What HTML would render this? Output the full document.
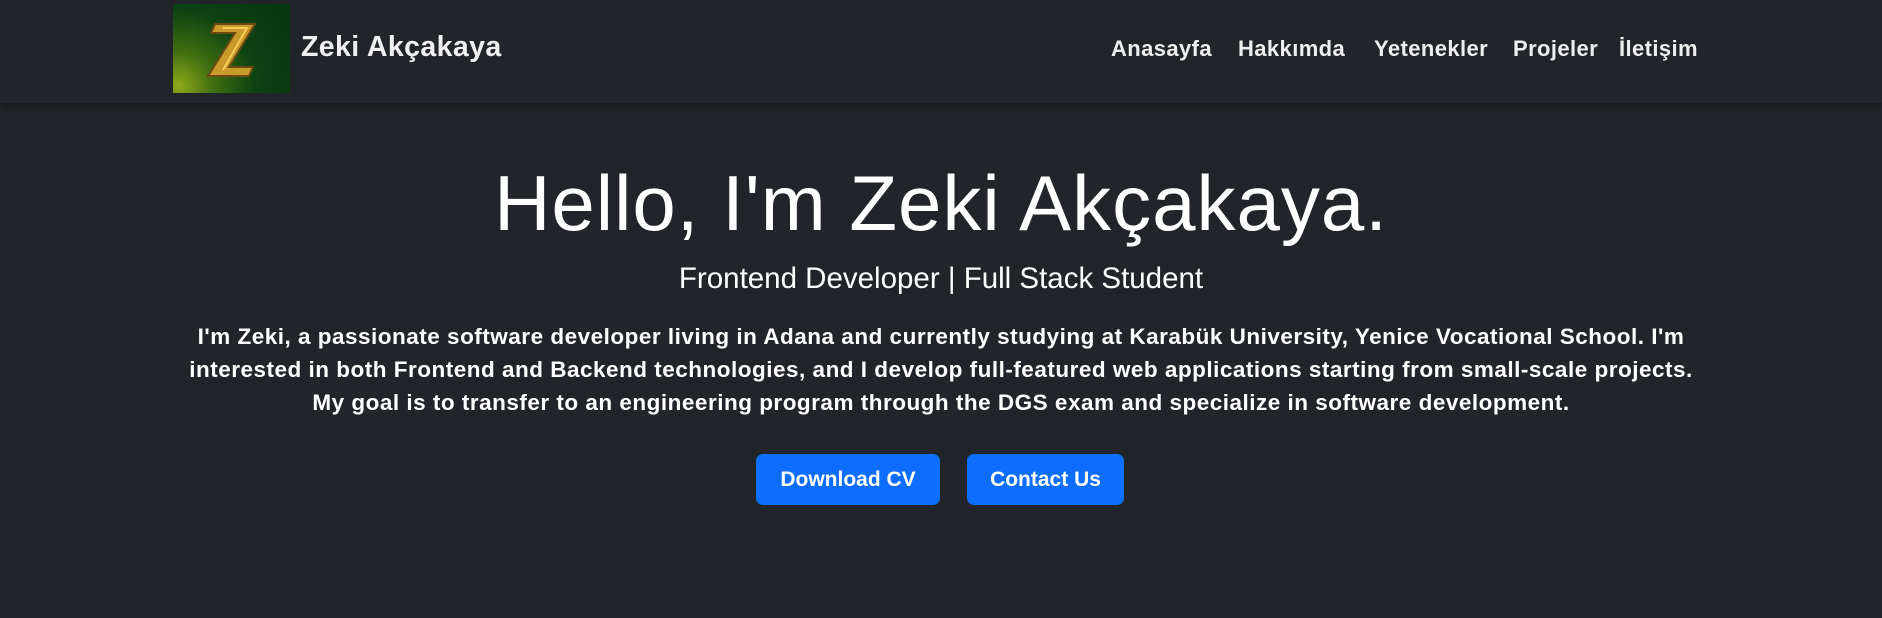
<!DOCTYPE html>
<html><head><meta charset="utf-8"><style>
*{margin:0;padding:0;box-sizing:border-box}
body{width:1882px;height:618px;background:#212529;font-family:"Liberation Sans",sans-serif;color:#fff;position:relative;overflow:hidden}
.nav{position:absolute;left:0;top:0;width:1882px;height:103px;background:#212529;box-shadow:0 3px 8px rgba(0,0,0,.35)}
.logo{position:absolute;left:173px;top:4px;width:117px;height:89px;background:radial-gradient(circle at 5% 92%,#8fa81a 0%,#3f6e10 25%,#0d4212 55%,#063510 100%)}
.brand{position:absolute;left:301px;top:31px;font-size:28.5px;font-weight:bold;color:#f0f0f0;letter-spacing:.4px}
.nl{position:absolute;top:36px;font-size:22px;font-weight:bold;color:#eee;white-space:nowrap;letter-spacing:.4px}
h1{position:absolute;left:0;width:1882px;top:158px;text-align:center;font-size:78px;font-weight:normal;letter-spacing:1px}
.sub{position:absolute;left:0;width:1882px;top:262px;text-align:center;font-size:29.5px}
.p{position:absolute;left:0;width:1882px;top:320px;text-align:center;font-size:22.5px;line-height:33px;font-weight:bold;letter-spacing:.5px}
.btn{position:absolute;top:454px;height:51px;background:#0d6efd;border-radius:7px;font-size:21px;font-weight:bold;text-align:center;line-height:51px}
</style></head><body>
<div class="nav">
<div class="logo"><svg width="117" height="89" viewBox="0 0 117 89"><path d="M42 20 L82 20 L56 63 L80 63 L76 72 L35 72 L62 29 L38 29 Z" fill="#c89a2a" stroke="#6b4a10" stroke-width="2"/><path d="M50 24 L74 24 L50 66" fill="none" stroke="#f3cc5a" stroke-width="2"/></svg></div>
<div class="brand">Zeki Akçakaya</div>
<div class="nl" style="left:1111px">Anasayfa</div>
<div class="nl" style="left:1238px">Hakkımda</div>
<div class="nl" style="left:1374px">Yetenekler</div>
<div class="nl" style="left:1513px">Projeler</div>
<div class="nl" style="left:1619px">İletişim</div>
</div>
<h1>Hello, I'm Zeki Akçakaya.</h1>
<div class="sub">Frontend Developer | Full Stack Student</div>
<div class="p">I'm Zeki, a passionate software developer living in Adana and currently studying at Karabük University, Yenice Vocational School. I'm<br>interested in both Frontend and Backend technologies, and I develop full-featured web applications starting from small-scale projects.<br>My goal is to transfer to an engineering program through the DGS exam and specialize in software development.</div>
<div class="btn" style="left:756px;width:184px">Download CV</div>
<div class="btn" style="left:967px;width:157px">Contact Us</div>
</body></html>
